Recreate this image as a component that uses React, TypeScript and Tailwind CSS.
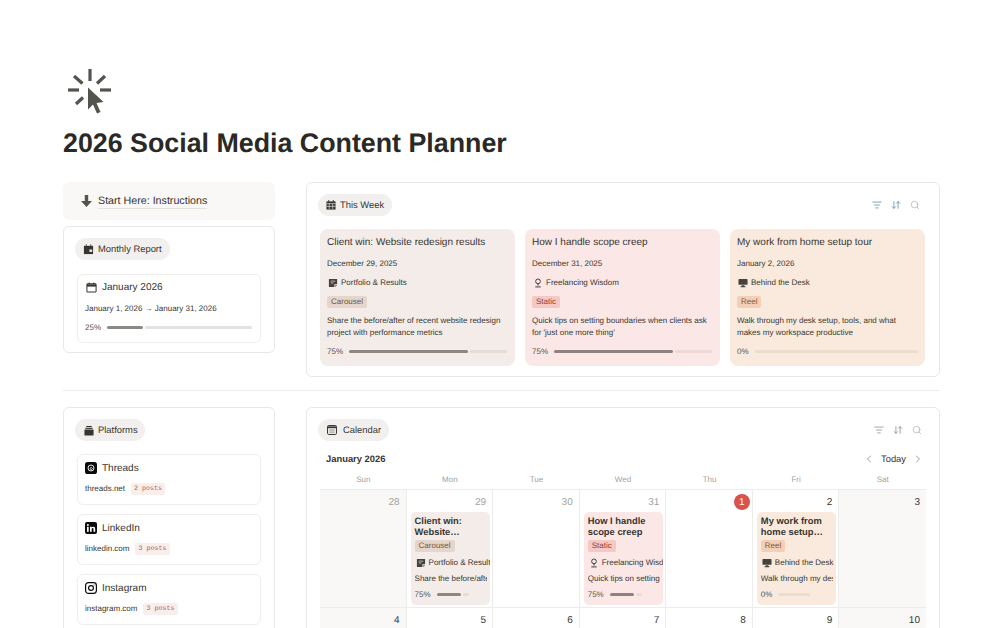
import { Search, ChevronLeft, ChevronRight, ArrowDownUp, ListFilter } from 'lucide-react';
import type { ReactNode } from 'react';

// ── Small drawn icons ─────────────────────────────

function CursorClick() {
    return (
        <svg width="45" height="46" viewBox="0 0 45 46" fill="none">
            <g stroke="#55534e" strokeWidth="3.2">
                <path d="M22 1v12" />
                <path d="M6 8l8.5 7.5" />
                <path d="M37 8l-8 7.5" />
                <path d="M0 22h11" />
                <path d="M32 22h11" />
                <path d="M8 36l7-6.5" />
            </g>
            <path d="M20 19.5L35.5 34l-7 1 4 9-3.5 1.5-4-9-5 5z" fill="#55534e" />
        </svg>
    );
}

function DownArrow() {
    return (
        <svg width="11" height="12" viewBox="0 0 11 12">
            <path d="M3.8 0h3.4v6H11L5.5 12 0 6h3.8z" fill="#55534e" />
        </svg>
    );
}

function NoteIcon() {
    return (
        <svg width="10" height="10" viewBox="0 0 11 11" className="shrink-0">
            <path d="M1 1h9v6H7v3H1z" fill="#44423e" />
            <path d="M8 8h2l-2 2z" fill="#44423e" />
            <path d="M3 3.5h5M3 5.5h3" stroke="#f4ece8" strokeWidth="0.7" />
        </svg>
    );
}

function BulbIcon() {
    return (
        <svg width="10" height="10" viewBox="0 0 11 11" fill="none" stroke="#44423e" strokeWidth="1.1" className="shrink-0">
            <circle cx="5.5" cy="3.7" r="2.6" />
            <path d="M5.5 6.5v2M2.5 9.8h6" />
        </svg>
    );
}

function DeskIcon() {
    return (
        <svg width="10" height="10" viewBox="0 0 11 11" className="shrink-0">
            <rect x="0.5" y="1" width="10" height="6.5" rx="1" fill="#44423e" />
            <path d="M4 8h3v1.2H8.2v1H2.8v-1H4z" fill="#44423e" />
        </svg>
    );
}

function CalendarPlain() {
    return (
        <svg width="11" height="11" viewBox="0 0 12 12" fill="none">
            <rect x="1" y="2" width="10" height="9" rx="1" stroke="#37352f" strokeWidth="1.1" />
            <path d="M1 2.5h10V5H1z" fill="#37352f" />
            <path d="M3.5 0.5v2M8.5 0.5v2" stroke="#37352f" strokeWidth="1.1" />
        </svg>
    );
}

function BlackCalendar() {
    return (
        <svg width="11" height="11" viewBox="0 0 12 12">
            <path d="M1 2h10v9H1z" fill="#37352f" />
            <path d="M3 0.5h1.2V2H3zM7.8 0.5H9V2H7.8z" fill="#37352f" />
            <rect x="7" y="6" width="3" height="2.6" fill="#f1f0ee" />
        </svg>
    );
}

function WeekCalendar() {
    return (
        <svg width="10" height="10" viewBox="0 0 11 11">
            <path d="M0.5 1.5h10v9h-10z" fill="#37352f" />
            <path d="M2.5 0h1v2h-1zM7.5 0h1v2h-1z" fill="#37352f" />
            <path d="M3.6 4v6M7.4 4v6M0.5 4h10M0.5 7h10" stroke="#f1f0ee" strokeWidth="0.7" />
        </svg>
    );
}

function PlatformIcon() {
    return (
        <svg width="10" height="11" viewBox="0 0 11 11">
            <rect x="0.5" y="4.5" width="10" height="6.5" rx="0.6" fill="#37352f" />
            <rect x="1.5" y="2.5" width="8" height="1.2" fill="#37352f" />
            <rect x="2.5" y="0.5" width="6" height="1.2" fill="#37352f" />
        </svg>
    );
}

function CalendarWindow() {
    return (
        <svg width="10" height="10" viewBox="0 0 11 11" fill="none">
            <rect x="0.6" y="0.6" width="9.8" height="9.8" rx="1.2" stroke="#37352f" strokeWidth="1.1" />
            <path d="M0.6 1.5h9.8v2H0.6z" fill="#37352f" />
            <path d="M2.5 5.5h6M2.5 7.8h6" stroke="#8a8883" strokeWidth="1" />
        </svg>
    );
}

function ThreadsIcon() {
    return (
        <svg width="12" height="12" viewBox="0 0 12 12">
            <rect width="12" height="12" rx="2.6" fill="#0b0b0b" />
            <circle cx="6" cy="6" r="3" fill="none" stroke="#fff" strokeWidth="0.9" />
            <circle cx="6.2" cy="6.6" r="1.1" fill="none" stroke="#fff" strokeWidth="0.7" />
        </svg>
    );
}

function LinkedinIcon() {
    return (
        <svg width="12" height="12" viewBox="0 0 12 12">
            <rect width="12" height="12" rx="2" fill="#0b0b0b" />
            <rect x="2" y="4.8" width="1.7" height="5" fill="#fff" />
            <circle cx="2.85" cy="3" r="1" fill="#fff" />
            <path d="M5 4.8h1.6v.8c.4-.6 1-.9 1.7-.9 1.3 0 1.9.8 1.9 2.2v2.9H8.5V7.2c0-.7-.3-1.1-.9-1.1s-.9.4-.9 1.1v2.6H5z" fill="#fff" />
        </svg>
    );
}

function InstagramIcon() {
    return (
        <svg width="12" height="12" viewBox="0 0 12 12" fill="none" stroke="#0b0b0b">
            <rect x="0.6" y="0.6" width="10.8" height="10.8" rx="2.8" strokeWidth="1.2" />
            <circle cx="6" cy="6" r="2.4" strokeWidth="1.2" />
            <circle cx="9" cy="3" r="0.5" fill="#0b0b0b" stroke="none" />
        </svg>
    );
}

// ── Shared pieces ────────────────────────────────

function Pill({ icon, label, className }: { icon: ReactNode; label: string; className: string }) {
    return (
        <div className={`flex h-[22px] items-center whitespace-nowrap rounded-full bg-[#f1f0ee] text-[9.4px] text-[#37352f] ${className}`}>
            {icon}
            <span>{label}</span>
        </div>
    );
}

function Progress({ label, value, barClass, trackClass, fillClass }: { label: string; value: number; barClass: string; trackClass: string; fillClass: string }) {
    return (
        <div className="flex h-[9px] items-center gap-[6px] text-[8px] leading-[9px] text-[#55534e]">
            <span>{label}</span>
            <div className={`flex h-[3px] gap-[2px] ${barClass}`}>
                {value > 0 && <div className={`h-full rounded-full ${fillClass}`} style={{ width: `${value}%` }} />}
                <div className={`h-full flex-1 rounded-full ${trackClass}`} />
            </div>
        </div>
    );
}

function Toolbar({ tint }: { tint: string }) {
    return (
        <div className={`flex items-center gap-[9px] ${tint}`}>
            <ListFilter size={10} strokeWidth={1.8} />
            <ArrowDownUp size={10} strokeWidth={1.8} />
            <Search size={10} strokeWidth={1.5} className="text-[#a3a29e]" />
        </div>
    );
}

// ── Data ─────────────────────────────────────────

const weekCards = [
    { title: 'Client win: Website redesign results', date: 'December 29, 2025', cat: 'Portfolio & Results', Icon: NoteIcon, tag: 'Carousel', desc: ['Share the before/after of recent website redesign', 'project with performance metrics'], pct: 75, bg: 'bg-[#f4ece8]', tagBg: 'bg-[#e6d5cb]', tagText: 'text-[#6f5547]', fill: 'bg-[#8e8680]', track: 'bg-[#e5dcd7]' },
    { title: 'How I handle scope creep', date: 'December 31, 2025', cat: 'Freelancing Wisdom', Icon: BulbIcon, tag: 'Static', desc: ['Quick tips on setting boundaries when clients ask', "for 'just one more thing'"], pct: 75, bg: 'bg-[#fbe7e6]', tagBg: 'bg-[#f5c8c5]', tagText: 'text-[#8c3f3a]', fill: 'bg-[#8e8280]', track: 'bg-[#ecd9d8]' },
    { title: 'My work from home setup tour', date: 'January 2, 2026', cat: 'Behind the Desk', Icon: DeskIcon, tag: 'Reel', desc: ['Walk through my desk setup, tools, and what', 'makes my workspace productive'], pct: 0, bg: 'bg-[#faeadd]', tagBg: 'bg-[#f3cfb5]', tagText: 'text-[#8b5430]', fill: 'bg-[#8e8680]', track: 'bg-[#ebdcd0]' },
];

const platforms = [
    { name: 'Threads', url: 'threads.net', posts: '2 posts', Icon: ThreadsIcon },
    { name: 'LinkedIn', url: 'linkedin.com', posts: '3 posts', Icon: LinkedinIcon },
    { name: 'Instagram', url: 'instagram.com', posts: '3 posts', Icon: InstagramIcon },
];

const days = ['Sun', 'Mon', 'Tue', 'Wed', 'Thu', 'Fri', 'Sat'];

const calCards: Record<string, { title: string[]; tag: string; cat: string; Icon: () => ReactNode; desc: string; pct: number; bg: string; tagBg: string; tagText: string; fill: string; track: string }> = {
    '29': { title: ['Client win:', 'Website…'], tag: 'Carousel', cat: 'Portfolio & Results', Icon: NoteIcon, desc: 'Share the before/after of', pct: 75, bg: 'bg-[#f4ece8]', tagBg: 'bg-[#e6d5cb]', tagText: 'text-[#6f5547]', fill: 'bg-[#8e8680]', track: 'bg-[#e5dcd7]' },
    '31': { title: ['How I handle', 'scope creep'], tag: 'Static', cat: 'Freelancing Wisdom', Icon: BulbIcon, desc: 'Quick tips on setting bound', pct: 75, bg: 'bg-[#fbe7e6]', tagBg: 'bg-[#f5c8c5]', tagText: 'text-[#8c3f3a]', fill: 'bg-[#8e8280]', track: 'bg-[#ecd9d8]' },
    '2': { title: ['My work from', 'home setup…'], tag: 'Reel', cat: 'Behind the Desk', Icon: DeskIcon, desc: 'Walk through my desk setup', pct: 0, bg: 'bg-[#faeadd]', tagBg: 'bg-[#f3cfb5]', tagText: 'text-[#8b5430]', fill: 'bg-[#8e8680]', track: 'bg-[#ebdcd0]' },
};

const row1 = [
    { n: '28', muted: true, weekend: true },
    { n: '29', muted: true, weekend: false },
    { n: '30', muted: true, weekend: false },
    { n: '31', muted: true, weekend: false },
    { n: '1', muted: false, weekend: false, today: true },
    { n: '2', muted: false, weekend: false },
    { n: '3', muted: false, weekend: true },
];

const row2 = ['4', '5', '6', '7', '8', '9', '10'];

// ── App ──────────────────────────────────────────

export default function App() {
    return (
        <div className="h-[628px] w-[1005px] overflow-hidden bg-white pl-[63px] pr-[65px] pt-[68px] font-['Liberation_Sans',sans-serif] text-[#37352f] [text-rendering:geometricPrecision]">
            <div className="pl-[5px]">
                <CursorClick />
            </div>
            <h1 className="mt-[11px] text-[26.8px] font-bold leading-[36px] text-[#2a2926]">2026 Social Media Content Planner</h1>

            <div className="mt-[21px] flex gap-[31px]">
                <div className="flex w-[212px] shrink-0 flex-col gap-[6px]">
                    <div className="flex h-[38px] items-center gap-[6px] rounded-[6px] bg-[#f9f8f6] pl-[18px] text-[10.7px]">
                        <DownArrow />
                        <span className="border-b border-[#e4e3df] leading-[14px]">Start Here: Instructions</span>
                    </div>
                    <div className="h-[127px] rounded-[6px] border border-[#e9e8e6] px-[11px] pt-[11px]">
                        <Pill icon={<BlackCalendar />} label="Monthly Report" className="w-[95px] gap-[4px] pl-[8px]" />
                        <div className="mt-[14px] ml-[2px] h-[69px] w-[184px] rounded-[6px] border border-[#efeeec] px-[7px] pt-[5px]">
                            <div className="flex h-[14px] items-center gap-[5px] pl-[1px] text-[10px] leading-[14px]">
                                <CalendarPlain />
                                <span className="pt-[1px]">January 2026</span>
                            </div>
                            <div className="mt-[9px] text-[8px] leading-[11px]">January 1, 2026 → January 31, 2026</div>
                            <div className="mt-[9px]">
                                <Progress label="25%" value={25} barClass="w-[145px]" trackClass="bg-[#e3e2e0]" fillClass="bg-[#8b8a87]" />
                            </div>
                        </div>
                    </div>
                </div>

                <div className="h-[195px] flex-1 rounded-[6px] border border-[#e9e8e6] px-[11px] pt-[11px]">
                    <div className="flex items-center justify-between pr-[8px]">
                        <Pill icon={<WeekCalendar />} label="This Week" className="w-[74px] gap-[4px] pl-[8px]" />
                        <Toolbar tint="text-[#4a86b0]" />
                    </div>
                    <div className="mt-[13px] flex gap-[10px] pl-[2px]">
                        {weekCards.map((c) => (
                            <div key={c.title} className={`h-[137px] w-[195px] rounded-[8px] px-[7px] pt-[7px] ${c.bg}`}>
                                <div className="text-[10px] leading-[14px]">{c.title}</div>
                                <div className="mt-[8px] text-[8px] leading-[11px]">{c.date}</div>
                                <div className="mt-[8px] flex items-center gap-[3px] pl-[1px] text-[8px] leading-[11px]">
                                    <c.Icon />
                                    <span>{c.cat}</span>
                                </div>
                                <div className={`mt-[8px] w-fit rounded-[2px] px-[4px] text-[8px] leading-[12px] ${c.tagBg} ${c.tagText}`}>{c.tag}</div>
                                <div className="mt-[7px] text-[8px] leading-[12px]">
                                    {c.desc.map((line) => (
                                        <div key={line}>{line}</div>
                                    ))}
                                </div>
                                <div className="mt-[8px]">
                                    <Progress label={`${c.pct}%`} value={c.pct} barClass={c.pct === 0 ? 'w-[163px]' : 'w-[158px]'} trackClass={c.track} fillClass={c.fill} />
                                </div>
                            </div>
                        ))}
                    </div>
                </div>
            </div>

            <div className="mt-[13px] h-px bg-[#ececea]" />

            <div className="mt-[16px] flex gap-[31px]">
                <div className="h-[240px] w-[212px] shrink-0 rounded-[6px] border border-[#e9e8e6] px-[11px] pt-[11px]">
                    <Pill icon={<PlatformIcon />} label="Platforms" className="w-[70px] gap-[4px] pl-[9px]" />
                    <div className="mt-[13px] ml-[2px] flex w-[184px] flex-col gap-[9px]">
                        {platforms.map((p) => (
                            <div key={p.name} className="h-[51px] rounded-[6px] border border-[#efeeec] px-[7px] pt-[6px]">
                                <div className="flex h-[14px] items-center gap-[5px] text-[10px] leading-[14px]">
                                    <p.Icon />
                                    <span className="pt-[1px]">{p.name}</span>
                                </div>
                                <div className="mt-[8px] flex items-center gap-[6px] text-[8px] leading-[12px]">
                                    <span>{p.url}</span>
                                    <span className="rounded-[2px] bg-[#f8eeec] px-[3px] font-['Liberation_Mono',monospace] text-[6.7px] text-[#b5605a]">{p.posts}</span>
                                </div>
                            </div>
                        ))}
                    </div>
                </div>

                <div className="h-[240px] flex-1 rounded-[6px] border border-[#e9e8e6] px-[13px] pt-[11px]">
                    <div className="flex items-center justify-between pr-[4px]">
                        <div className="-ml-[2px]">
                            <Pill icon={<CalendarWindow />} label="Calendar" className="w-[71px] gap-[6px] pl-[9px]" />
                        </div>
                        <Toolbar tint="text-[#8a8883]" />
                    </div>
                    <div className="mt-[11px] flex h-[14px] items-center justify-between pl-[6px] pr-[2px]">
                        <span className="text-[9.4px] font-bold leading-[14px] text-[#37352f]">January 2026</span>
                        <div className="flex items-center gap-[6px] text-[9.4px]">
                            <ChevronLeft size={12} strokeWidth={1.4} className="text-[#77756f]" />
                            <span>Today</span>
                            <ChevronRight size={12} strokeWidth={1.4} className="text-[#77756f]" />
                        </div>
                    </div>
                    <div className="mt-[6px] grid grid-cols-7 border-b border-[#ececea]">
                        {days.map((d) => (
                            <div key={d} className="h-[17px] text-center text-[8px] leading-[16px] text-[#a3a29e]">{d}</div>
                        ))}
                    </div>
                    <div className="grid grid-cols-7 border-b border-[#ececea]">
                        {row1.map((cell) => {
                            const card = calCards[cell.n];
                            return (
                                <div key={cell.n} className={`h-[117px] border-r border-[#ececea] last:border-r-0 ${cell.weekend ? 'bg-[#f9f8f7]' : ''}`}>
                                    <div className={`flex h-[22px] items-center justify-end pr-[6px] pt-[2px] text-[10px] ${cell.muted ? 'text-[#a3a29e]' : 'text-[#37352f]'}`}>
                                        {cell.today ? (
                                            <span className="-mr-[4px] flex size-[16px] items-center justify-center rounded-full bg-[#d9534a] text-white">{cell.n}</span>
                                        ) : cell.n}
                                    </div>
                                    {card && (
                                        <div className={`ml-[4px] mr-[2px] h-[93px] overflow-hidden rounded-[5px] pl-[4px] pt-[3px] ${card.bg}`}>
                                            <div className="text-[9.4px] font-bold leading-[11px] text-[#37352f]">
                                                {card.title.map((line) => (
                                                    <div key={line} className="whitespace-nowrap">{line}</div>
                                                ))}
                                            </div>
                                            <div className={`mt-[3px] w-fit rounded-[2px] px-[4px] text-[8px] leading-[12px] ${card.tagBg} ${card.tagText}`}>{card.tag}</div>
                                            <div className="mt-[5px] flex items-center gap-[3px] whitespace-nowrap pl-[1px] text-[8px] leading-[11px]">
                                                <card.Icon />
                                                <span>{card.cat}</span>
                                            </div>
                                            <div className="mt-[5px] mr-[3px] overflow-hidden whitespace-nowrap text-[8px] leading-[11px]">{card.desc}</div>
                                            <div className="mt-[6px]">
                                                <Progress label={`${card.pct}%`} value={card.pct} barClass="w-[32px]" trackClass={card.track} fillClass={card.fill} />
                                            </div>
                                        </div>
                                    )}
                                </div>
                            );
                        })}
                    </div>
                    <div className="grid grid-cols-7">
                        {row2.map((n, i) => (
                            <div key={n} className={`flex h-[24px] items-center justify-end border-r border-[#ececea] pr-[6px] text-[10px] last:border-r-0 ${i === 0 || i === 6 ? 'bg-[#f9f8f7]' : ''}`}>{n}</div>
                        ))}
                    </div>
                </div>
            </div>
        </div>
    );
}
